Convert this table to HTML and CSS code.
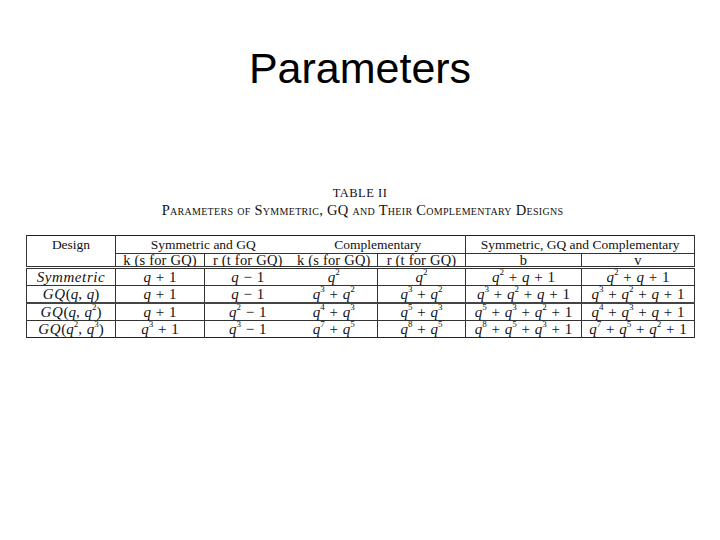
FILE: index.html
```html
<!DOCTYPE html>
<html>
<head>
<meta charset="utf-8">
<link rel="stylesheet" href="styles.css">
</head>
<body>
<div class="slide">
  <h1 class="title">Parameters</h1>
  <div class="caption">
    <div class="cap-num">TABLE II</div>
    <div class="cap-text">Parameters of Symmetric, GQ and Their Complementary Designs</div>
  </div>
  <table class="params">
    <colgroup>
      <col class="c-design"><col class="c-k1"><col class="c-r1"><col class="c-k2"><col class="c-r2"><col class="c-b"><col class="c-v">
    </colgroup>
    <thead>
      <tr class="h1">
        <th rowspan="2" class="design-h">Design</th>
        <th colspan="2" class="nobr">Symmetric and GQ</th>
        <th colspan="2">Complementary</th>
        <th colspan="2">Symmetric, GQ and Complementary</th>
      </tr>
      <tr class="h2">
        <th>k (s for GQ)</th>
        <th class="nobr">r (t for GQ)</th>
        <th>k (s for GQ)</th>
        <th>r (t for GQ)</th>
        <th>b</th>
        <th>v</th>
      </tr>
    </thead>
    <tbody>
      <tr class="first">
        <td><i class="name">Symmetric</i></td>
        <td><i>q</i> + 1</td>
        <td class="nobr"><i>q</i> − 1</td>
        <td><i>q</i><sup>2</sup></td>
        <td><i>q</i><sup>2</sup></td>
        <td><i>q</i><sup>2</sup> + <i>q</i> + 1</td>
        <td><i>q</i><sup>2</sup> + <i>q</i> + 1</td>
      </tr>
      <tr>
        <td><i class="name">GQ</i>(<i>q</i>, <i>q</i>)</td>
        <td><i>q</i> + 1</td>
        <td class="nobr"><i>q</i> − 1</td>
        <td><i>q</i><sup>3</sup> + <i>q</i><sup>2</sup></td>
        <td><i>q</i><sup>3</sup> + <i>q</i><sup>2</sup></td>
        <td><i>q</i><sup>3</sup> + <i>q</i><sup>2</sup> + <i>q</i> + 1</td>
        <td><i>q</i><sup>3</sup> + <i>q</i><sup>2</sup> + <i>q</i> + 1</td>
      </tr>
      <tr class="thick">
        <td><i class="name">GQ</i>(<i>q</i>, <i>q</i><sup>2</sup>)</td>
        <td><i>q</i> + 1</td>
        <td class="nobr"><i>q</i><sup>2</sup> − 1</td>
        <td><i>q</i><sup>4</sup> + <i>q</i><sup>3</sup></td>
        <td><i>q</i><sup>5</sup> + <i>q</i><sup>3</sup></td>
        <td><i>q</i><sup>5</sup> + <i>q</i><sup>3</sup> + <i>q</i><sup>2</sup> + 1</td>
        <td><i>q</i><sup>4</sup> + <i>q</i><sup>3</sup> + <i>q</i> + 1</td>
      </tr>
      <tr>
        <td><i class="name">GQ</i>(<i>q</i><sup>2</sup>, <i>q</i><sup>3</sup>)</td>
        <td><i>q</i><sup>3</sup> + 1</td>
        <td class="nobr"><i>q</i><sup>3</sup> − 1</td>
        <td><i>q</i><sup>7</sup> + <i>q</i><sup>5</sup></td>
        <td><i>q</i><sup>8</sup> + <i>q</i><sup>5</sup></td>
        <td><i>q</i><sup>8</sup> + <i>q</i><sup>5</sup> + <i>q</i><sup>3</sup> + 1</td>
        <td><i>q</i><sup>7</sup> + <i>q</i><sup>5</sup> + <i>q</i><sup>2</sup> + 1</td>
      </tr>
    </tbody>
  </table>
</div>
</body>
</html>
```
FILE: styles.css
```css
html, body {
  margin: 0;
  padding: 0;
  background: #ffffff;
}
.slide {
  width: 720px;
  height: 540px;
  box-sizing: border-box;
  padding-top: 44px;
  color: #000;
}
.title {
  margin: 0;
  font-family: "Liberation Sans", Arial, sans-serif;
  font-weight: normal;
  font-size: 43px;
  line-height: 48px;
  text-align: center;
}
.caption {
  margin-top: 94px;
  font-family: "Liberation Serif", "Times New Roman", serif;
  color: #111;
  text-align: center;
}
.cap-num {
  font-size: 12.5px;
  line-height: 15px;
  letter-spacing: 0.5px;
}
.cap-text {
  font-size: 14.5px;
  line-height: 18px;
  font-variant: small-caps;
  letter-spacing: 0.3px;
  padding-left: 5px;
}
.params {
  margin-top: 16px;
  margin-left: 26px;
  width: 668px;
  table-layout: fixed;
  border-collapse: collapse;
  border: 1px solid #222;
  font-family: "Liberation Serif", "Times New Roman", serif;
  color: #111;
}
.c-design { width: 89px; }
.c-k1 { width: 89px; }
.c-r1 { width: 86px; }
.c-k2 { width: 87px; }
.c-r2 { width: 88px; }
.c-b { width: 116px; }
.c-v { width: 113px; }
.params th, .params td {
  border-left: 1px solid #333;
  border-right: 1px solid #333;
  padding: 0;
  text-align: center;
  white-space: nowrap;
  font-weight: normal;
  overflow: hidden;
}
.params .nobr {
  border-right: none;
}
.params .nobr + th, .params .nobr + td {
  border-left: none;
}
.params th {
  font-size: 13.5px;
}
.h1 th {
  height: 17px;
  line-height: 17px;
  vertical-align: top;
}
.h1 .design-h {
  vertical-align: top;
}
.h2 th {
  height: 12px;
  line-height: 12px;
  font-size: 14.5px;
  letter-spacing: 0.2px;
  border-top: 1px solid #333;
}
.params td {
  font-size: 15px;
  height: 16px;
  line-height: 16px;
  word-spacing: 1px;
  border-top: 1px solid #333;
}
.params td .name {
  letter-spacing: 0.6px;
}
.params tbody tr.first td {
  border-top: 3px double #333;
}
.params tbody tr.thick td {
  border-top: 2px solid #444;
}
.params i {
  font-style: italic;
}
.params sup {
  font-size: 9px;
  line-height: 0;
  vertical-align: 7px;
  word-spacing: 0;
}
```
